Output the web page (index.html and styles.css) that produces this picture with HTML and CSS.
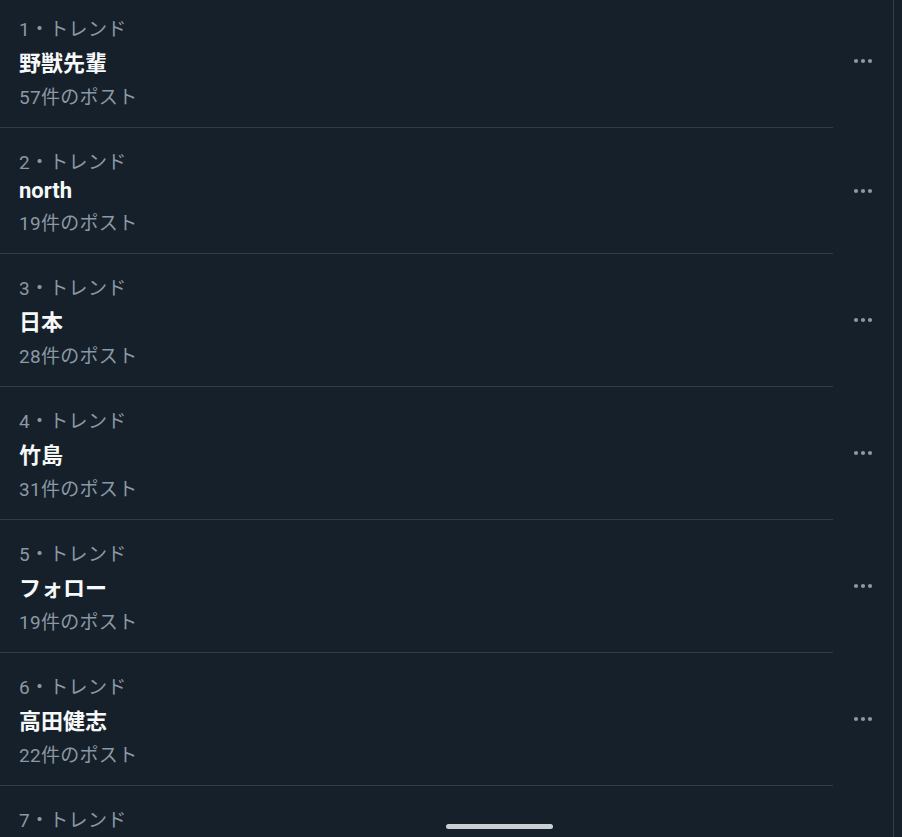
FILE: index.html
```html
<!DOCTYPE html>
<html lang="ja">
<head>
<meta charset="utf-8">
<link rel="stylesheet" href="styles.css">
</head>
<body>
<div class="page">
  <div class="list">
    <div class="row first">
      <div class="label">1・トレンド</div>
      <div class="title">野獣先輩</div>
      <div class="more"><svg width="20" height="6" viewBox="0 0 20 6"><circle cx="3" cy="3" r="2.1"/><circle cx="10" cy="3" r="2.1"/><circle cx="17" cy="3" r="2.1"/></svg></div>
      <div class="count">57件のポスト</div>
      <div class="divider"></div>
    </div>
    <div class="row">
      <div class="label">2・トレンド</div>
      <div class="title">north</div>
      <div class="more"><svg width="20" height="6" viewBox="0 0 20 6"><circle cx="3" cy="3" r="2.1"/><circle cx="10" cy="3" r="2.1"/><circle cx="17" cy="3" r="2.1"/></svg></div>
      <div class="count">19件のポスト</div>
      <div class="divider"></div>
    </div>
    <div class="row">
      <div class="label">3・トレンド</div>
      <div class="title">日本</div>
      <div class="more"><svg width="20" height="6" viewBox="0 0 20 6"><circle cx="3" cy="3" r="2.1"/><circle cx="10" cy="3" r="2.1"/><circle cx="17" cy="3" r="2.1"/></svg></div>
      <div class="count">28件のポスト</div>
      <div class="divider"></div>
    </div>
    <div class="row">
      <div class="label">4・トレンド</div>
      <div class="title">竹島</div>
      <div class="more"><svg width="20" height="6" viewBox="0 0 20 6"><circle cx="3" cy="3" r="2.1"/><circle cx="10" cy="3" r="2.1"/><circle cx="17" cy="3" r="2.1"/></svg></div>
      <div class="count">31件のポスト</div>
      <div class="divider"></div>
    </div>
    <div class="row">
      <div class="label">5・トレンド</div>
      <div class="title">フォロー</div>
      <div class="more"><svg width="20" height="6" viewBox="0 0 20 6"><circle cx="3" cy="3" r="2.1"/><circle cx="10" cy="3" r="2.1"/><circle cx="17" cy="3" r="2.1"/></svg></div>
      <div class="count">19件のポスト</div>
      <div class="divider"></div>
    </div>
    <div class="row">
      <div class="label">6・トレンド</div>
      <div class="title">高田健志</div>
      <div class="more"><svg width="20" height="6" viewBox="0 0 20 6"><circle cx="3" cy="3" r="2.1"/><circle cx="10" cy="3" r="2.1"/><circle cx="17" cy="3" r="2.1"/></svg></div>
      <div class="count">22件のポスト</div>
      <div class="divider"></div>
    </div>
    <div class="row">
      <div class="label">7・トレンド</div>
      <div class="title">&nbsp;</div>
      <div class="count">&nbsp;</div>
    </div>
  </div>
</div>
<div class="home-indicator"></div>
</body>
</html>
```

FILE: styles.css
```css
html, body {
  margin: 0;
  padding: 0;
  background: #16202a;
  height: 100%;
  overflow: hidden;
}
body {
  font-family: Roboto, "Noto Sans CJK JP", sans-serif;
  color: #f7f9f9;
}
.page {
  display: flex;
  height: 100%;
}
.list {
  width: 893px;
  border-right: 1px solid #333e48;
  margin-top: -5px;
  flex: none;
}
.row {
  display: grid;
  grid-template-columns: 833px 60px;
  row-gap: 4px;
  padding-top: 19px;
}
.label, .title, .count {
  grid-column: 1;
  padding-left: 19px;
}
.label, .count {
  font-size: 19px;
  color: #8b98a5;
  letter-spacing: 0.3px;
}
.count {
  margin-top: 1px;
}
.title {
  font-size: 22px;
  font-weight: 700;
  color: #f7f9f9;
}
.more {
  grid-column: 2;
  grid-row: 2;
  align-self: center;
  display: flex;
  justify-content: center;
}
.more svg {
  display: block;
  fill: #8b98a5;
}
.divider {
  grid-column: 1;
  height: 1px;
  background: #323c46;
  margin-top: 14px;
}
.home-indicator {
  position: fixed;
  left: 446px;
  top: 824px;
  width: 107px;
  height: 5px;
  border-radius: 3px;
  background: #cacfd3;
}
```
